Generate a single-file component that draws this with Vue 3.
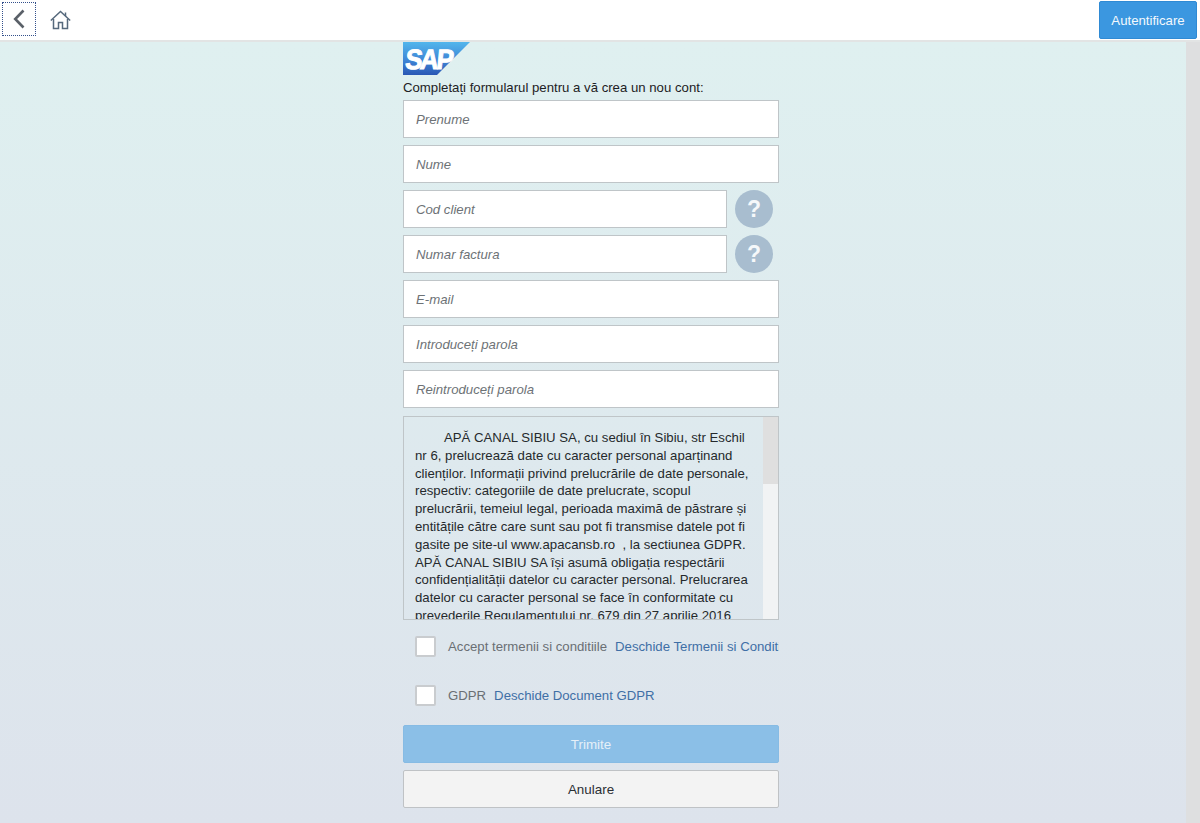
<script setup>
const fields = [
  { ph: 'Prenume' },
  { ph: 'Nume' },
  { ph: 'Cod client', help: true },
  { ph: 'Numar factura', help: true },
  { ph: 'E-mail' },
  { ph: 'Introduceți parola' },
  { ph: 'Reintroduceți parola' }
]
</script>

<template>
  <div class="page">
    <header class="topbar">
      <div class="nav">
        <button class="back" aria-label="Înapoi">
          <svg width="12" height="20" viewBox="0 0 12 20">
            <path d="M10.5 1.500 2.200 10l8.300 8.500" fill="none" stroke="#5a6068" stroke-width="2.600" />
          </svg>
        </button>
        <button class="home" aria-label="Acasă">
          <svg width="21" height="20" viewBox="0 0 21 20">
            <path d="M.8 10.500 10.500 1.500l9.700 9" fill="none" stroke="#56697c" stroke-width="1.500" />
            <path d="M3.500 9v9.500h5v-6h4v6h5V9" fill="none" stroke="#56697c" stroke-width="1.500" />
            <path d="M15.500 2.500v3.500" fill="none" stroke="#56697c" stroke-width="1.500" />
          </svg>
        </button>
      </div>
      <button class="login">Autentificare</button>
    </header>

    <div class="body">
      <main class="form">
        <svg class="logo" width="67" height="33" viewBox="0 0 67 33">
          <defs>
            <linearGradient id="sapfill" x1="0" y1="0" x2="0" y2="1">
              <stop offset="0" stop-color="#52b6ec" />
              <stop offset="0.550" stop-color="#3f86d6" />
              <stop offset="1" stop-color="#2a57b4" />
            </linearGradient>
          </defs>
          <polygon points="0,0 67,0 34,33 0,33" fill="url(#sapfill)" />
          <text class="logo-text" transform="translate(1.500 27) skewX(-6) scale(.92 1)">SAP</text>
        </svg>

        <p class="intro">Completați formularul pentru a vă crea un nou cont:</p>

        <div class="fields">
          <div v-for="f in fields" :key="f.ph" class="field-row">
            <input class="input" type="text" :placeholder="f.ph" />
            <span v-if="f.help" class="help">?</span>
          </div>
        </div>

        <section class="terms">
          <div class="terms-text">
            <p>
              <span class="indent"></span>APĂ CANAL SIBIU SA, cu sediul în Sibiu, str Eschil nr 6, prelucrează date cu caracter personal aparținand clienților. Informații privind prelucrările de date personale, respectiv: categoriile de date prelucrate, scopul prelucrării, temeiul legal, perioada maximă de păstrare și entitățile către care sunt sau pot fi transmise datele pot fi gasite pe site-ul www.apacansb.ro &nbsp;, la sectiunea GDPR. APĂ CANAL SIBIU SA își asumă obligația respectării confidențialității datelor cu caracter personal. Prelucrarea datelor cu caracter personal se face în conformitate cu prevederile Regulamentului nr. 679 din 27 aprilie 2016
            </p>
          </div>
          <div class="track"><div class="thumb"></div></div>
        </section>

        <div class="check-row first">
          <span class="box"></span>
          <span class="check-label">Accept termenii si conditiile</span>
          <a class="link">Deschide Termenii si Conditii</a>
        </div>
        <div class="check-row second">
          <span class="box"></span>
          <span class="check-label">GDPR</span>
          <a class="link">Deschide Document GDPR</a>
        </div>

        <button class="btn send">Trimite</button>
        <button class="btn cancel">Anulare</button>
      </main>
      <aside class="page-scroll"></aside>
    </div>
  </div>
</template>

<style scoped>
.page {
  height: 823px;
  overflow: hidden;
  display: flex;
  flex-direction: column;
  font-family: "Liberation Sans", Arial, sans-serif;
}

.topbar {
  height: 40px;
  flex: none;
  display: flex;
  align-items: flex-start;
  justify-content: space-between;
  background: #fff;
  border-bottom: 2px solid #e2e4e4;
}
.nav { display: flex; align-items: flex-start; }
.back {
  width: 34px;
  height: 34px;
  margin: 2px 0 0 2px;
  padding: 0;
  display: flex;
  align-items: center;
  justify-content: center;
  background: none;
  border: 1px dotted #33508c;
}
.home {
  margin: 10px 0 0 14px;
  padding: 0;
  background: none;
  border: 0;
  display: flex;
}
.login {
  width: 98px;
  height: 38px;
  margin: 1px 3px 0 0;
  padding: 0;
  background: #3b97e0;
  border: 1px solid #2f8ad4;
  border-radius: 2px;
  color: #f4f9fd;
  font: 13.2px "Liberation Sans", Arial, sans-serif;
}

.body {
  flex: 1;
  display: flex;
  background: linear-gradient(#dff0f0, #dde3ec);
  min-height: 0;
}
.form {
  width: 376px;
  margin-left: 403px;
  flex: none;
}
.logo { display: block; }
.logo-text {
  font: bold 28px "Liberation Sans", Arial, sans-serif;
  letter-spacing: -2.500px;
  fill: #fff;
  stroke: #fff;
  stroke-width: 1px;
}
.intro {
  margin: 4px 0 4px;
  font-size: 13.2px;
  line-height: 17px;
  color: #1d2124;
}

.fields { display: flex; flex-direction: column; gap: 7px; }
.field-row { display: flex; align-items: center; height: 38px; }
.input {
  flex: 1;
  min-width: 0;
  height: 38px;
  box-sizing: border-box;
  padding: 0 12px;
  background: #fff;
  border: 1px solid #bfc5c8;
  border-radius: 0;
  font: italic 13.2px "Liberation Sans", Arial, sans-serif;
}
.input::placeholder { color: #6d7276; opacity: 1; }
.help {
  width: 38px;
  height: 38px;
  flex: none;
  margin: 0 6px 0 8px;
  border-radius: 50%;
  background: #a8bdcf;
  color: #f5f8fa;
  font-size: 23px;
  font-weight: bold;
  line-height: 38px;
  text-align: center;
}

.terms {
  height: 204px;
  margin-top: 8px;
  box-sizing: border-box;
  display: flex;
  overflow: hidden;
  border: 1px solid #bfc5c8;
}
.terms-text { flex: 1; min-width: 0; padding: 12px 12px 0 11px; }
.terms-text p {
  margin: 0;
  font-size: 13.2px;
  line-height: 17.8px;
  color: #25292c;
}
.indent { display: inline-block; width: 29px; }
.track { width: 15px; flex: none; background: #f1f3f4; }
.thumb { height: 67px; background: #dfdfdf; }

.check-row {
  display: flex;
  align-items: center;
  height: 22px;
  padding-left: 12px;
  white-space: nowrap;
  overflow: hidden;
  font-size: 13.2px;
}
.check-row.first { margin-top: 15px; }
.check-row.second { margin-top: 27px; }
.box {
  width: 21px;
  height: 21px;
  flex: none;
  box-sizing: border-box;
  margin-right: 12px;
  background: #fff;
  border: 2px solid #c9cccf;
  border-radius: 2px;
}
.check-label { color: #6a6f74; margin-right: 8px; }
.link { color: #3f6fa6; }

.btn {
  display: block;
  width: 100%;
  box-sizing: border-box;
  padding: 0;
  border-radius: 2px;
  font: 13.4px "Liberation Sans", Arial, sans-serif;
}
.send {
  height: 38px;
  margin-top: 19px;
  background: #8bbfe7;
  border: 1px solid #86bbe4;
  color: #e6f0f8;
}
.cancel {
  height: 38px;
  margin-top: 7px;
  background: #f3f3f3;
  border: 1px solid #bfc2c5;
  color: #2b2f33;
}

.page-scroll {
  width: 14px;
  margin-left: auto;
  flex: none;
  background: #dedfe0;
}
</style>

<style>
html, body { margin: 0; overflow: hidden; }
</style>
